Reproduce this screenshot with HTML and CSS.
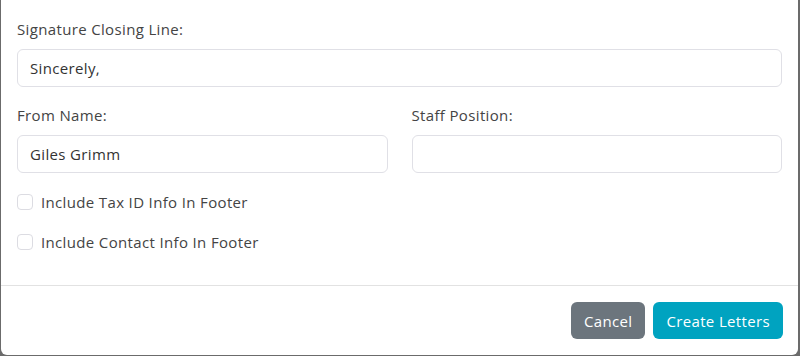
FILE: index.html
```html
<!DOCTYPE html>
<html lang="en">
<head>
  <meta charset="UTF-8" />
  <title>Create Letters</title>
  <link rel="stylesheet" href="styles.css">
</head>
<body>
  <div class="modal">
    <div class="modal-body">
      <div class="form-group">
        <label class="form-label">Signature Closing Line:</label>
        <input class="form-control" type="text" value="Sincerely,">
      </div>
      <div class="form-row">
        <div class="form-group">
          <label class="form-label">From Name:</label>
          <input class="form-control" type="text" value="Giles Grimm">
        </div>
        <div class="form-group">
          <label class="form-label">Staff Position:</label>
          <input class="form-control" type="text" value="">
        </div>
      </div>
      <label class="check-row">
        <input type="checkbox" class="check-input">
        <span class="check-box"></span>
        <span>Include Tax ID Info In Footer</span>
      </label>
      <label class="check-row">
        <input type="checkbox" class="check-input">
        <span class="check-box"></span>
        <span>Include Contact Info In Footer</span>
      </label>
    </div>
    <div class="modal-footer">
      <button class="btn btn-secondary">Cancel</button>
      <button class="btn btn-info">Create Letters</button>
    </div>
  </div>
</body>
</html>
```

FILE: styles.css
```css
/* RESET */
* { box-sizing: border-box; margin: 0; padding: 0; }
html, body { width: 100%; height: 100%; overflow: hidden; }

/* BACKDROP */
body {
  background: #6b6b6b;
  font-family: "Open Sans", "Noto Sans", sans-serif;
  font-size: 15px;
  letter-spacing: 0.35px;
  color: #444;
}

/* MODAL */
.modal {
  margin-left: 1px;
  width: 797px;
  height: 355px;
  background: #fff;
  border-radius: 0 0 6px 6px;
  display: flex;
  flex-direction: column;
}
.modal-body {
  padding: 18px 16px 0;
  height: 285px;
}

/* FORM */
.form-group { margin-bottom: 17px; }
.form-row {
  display: grid;
  grid-template-columns: 1fr 1fr;
  column-gap: 24px;
}
.form-label {
  display: block;
  line-height: 23px;
  margin-bottom: 8px;
}
.form-control {
  display: block;
  width: 100%;
  height: 38px;
  padding: 0 12px;
  border: 1px solid #e0e0e6;
  border-radius: 6px;
  font: inherit;
  letter-spacing: inherit;
  color: #333;
  outline: none;
}

/* CHECKBOXES */
.check-row {
  display: flex;
  align-items: center;
  gap: 8px;
  height: 24px;
  margin-bottom: 16px;
  cursor: pointer;
}
.check-input { display: none; }
.check-box {
  width: 16px;
  height: 16px;
  border: 1px solid #dcdce2;
  border-radius: 4px;
  background: #fff;
}

/* FOOTER */
.modal-footer {
  border-top: 1px solid #e2e2e2;
  padding: 16px 15px 16px;
  display: flex;
  justify-content: flex-end;
  gap: 8px;
}
.btn {
  height: 37px;
  padding: 0 13px;
  border: none;
  border-radius: 6px;
  font: inherit;
  letter-spacing: inherit;
  color: #fff;
  cursor: pointer;
}
.btn-secondary { background: #6c757d; }
.btn-info { background: #00a3c0; }
```
